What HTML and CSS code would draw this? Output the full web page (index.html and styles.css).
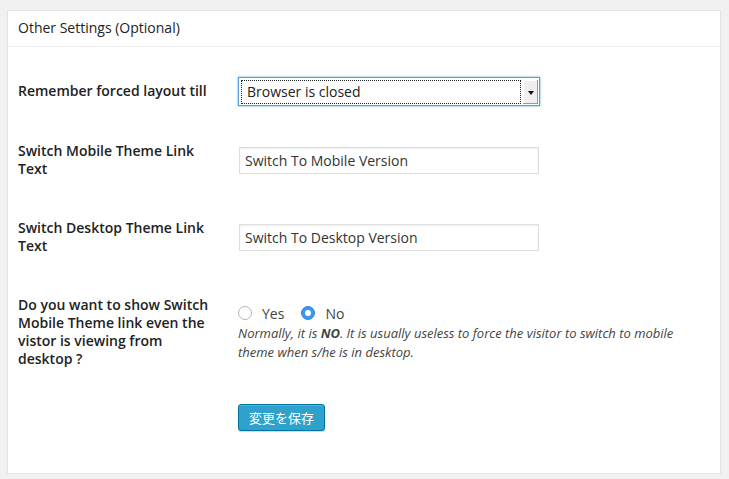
FILE: index.html
```html
<!DOCTYPE html>
<html lang="en">
<head>
<meta charset="utf-8">
<title>Other Settings</title>
<link rel="stylesheet" href="styles.css">
</head>
<body>
<div class="postbox">
  <h3 class="hndle">Other Settings (Optional)</h3>
  <div class="inside">
    <div class="form-table">
      <div class="row row-first">
        <div class="th">Remember forced layout till</div>
        <div class="td">
          <div class="select">
            <span class="select-value">Browser is closed</span>
            <span class="select-arrow"><span class="tri"></span></span>
          </div>
        </div>
      </div>
      <div class="row">
        <div class="th">Switch Mobile Theme Link Text</div>
        <div class="td"><div class="input">Switch To Mobile Version</div></div>
      </div>
      <div class="row">
        <div class="th">Switch Desktop Theme Link Text</div>
        <div class="td"><div class="input">Switch To Desktop Version</div></div>
      </div>
      <div class="row">
        <div class="th">Do you want to show Switch Mobile Theme link even the vistor is viewing from desktop ?</div>
        <div class="td">
          <div class="radios">
            <label class="radio"><span class="dot"></span>Yes</label>
            <label class="radio"><span class="dot dot-on"></span>No</label>
          </div>
          <p class="description">Normally, it is <b>NO</b>. It is usually useless to force the visitor to switch to mobile theme when s/he is in desktop.</p>
        </div>
      </div>
    </div>
    <div class="submit"><button class="button-primary" type="button">変更を保存</button></div>
  </div>
</div>
</body>
</html>
```
FILE: styles.css
```css
* { box-sizing: border-box; }
html, body { margin: 0; }
body {
  background: #f1f1f1;
  padding: 10px 9px 0 7px;
  font-family: "Open Sans", "Noto Sans", sans-serif;
  color: #222;
}
.postbox {
  width: 714px;
  background: #fff;
  border: 1px solid #e5e5e5;
  box-shadow: 0 1px 1px rgba(0,0,0,.06);
}
.hndle {
  margin: 0;
  padding: 7px 10px 9px;
  font-size: 14px;
  line-height: 19px;
  font-weight: 400;
  color: #222;
  border-bottom: 1px solid #eee;
}
.inside { padding: 15px 10px 42px; }
.row {
  display: grid;
  grid-template-columns: 210px 1fr;
}
.th {
  padding: 20px 10px 21px 0;
  font-size: 14px;
  line-height: 18px;
  font-weight: 600;
  color: #222;
}
.td {
  padding: 15px 10px;
  align-self: center;
}
.row-first .td { padding-bottom: 16px; }
.select {
  width: 302px;
  height: 29px;
  border: 1px solid #5b9dd9;
  box-shadow: 0 0 2px rgba(30,140,190,.8);
  display: flex;
  align-items: stretch;
  padding: 2px 1px 1px 2px;
  background: #fff;
}
.select-value {
  flex: 1;
  border: 1px dotted #222;
  font-size: 14px;
  line-height: 21px;
  padding-left: 5px;
  color: #222;
}
.select-arrow {
  width: 15px;
  margin-left: 2px;
  background: #efefef;
  box-shadow: inset -1px -1px 0 #9a9a9a, inset 1px 1px 0 #fff;
  display: flex;
  align-items: center;
  justify-content: center;
}
.tri {
  width: 0; height: 0;
  border-left: 3px solid transparent;
  border-right: 3px solid transparent;
  border-top: 4px solid #111;
  margin-top: 1px;
}
.input {
  width: 300px;
  height: 27px;
  border: 1px solid #ddd;
  box-shadow: inset 0 1px 2px rgba(0,0,0,.07);
  font-size: 14px;
  line-height: 25px;
  padding-left: 5px;
  color: #333;
  margin-left: 1px;
}
.radios {
  display: flex;
  align-items: center;
  height: 19px;
  margin-bottom: 1px;
  font-size: 14px;
  line-height: 17px;
  color: #444;
}
.radio {
  display: flex;
  align-items: center;
  margin-right: 17px;
}
.dot {
  width: 14px;
  height: 14px;
  border-radius: 50%;
  border: 1px solid #b4b4b4;
  background: #fff;
  margin-right: 10px;
  display: flex;
  align-items: center;
  justify-content: center;
}
.dot-on {
  border-color: #2f88ea;
  background: #3b95f3;
}
.dot-on::after {
  content: "";
  width: 6px;
  height: 6px;
  border-radius: 50%;
  background: #fff;
}
.description {
  margin: 0;
  font-size: 13px;
  line-height: 19px;
  font-style: italic;
  color: #444;
}
.submit { padding: 15px 0 0 220px; }
.button-primary {
  display: block;
  margin: 0;
  height: 27px;
  padding: 0 10px;
  background: #2ea2cc;
  border: 1px solid #0074a2;
  border-radius: 3px;
  box-shadow: inset 0 1px 0 rgba(120,200,230,.5), 0 1px 0 rgba(0,0,0,.15);
  color: #fff;
  font-family: "Noto Sans CJK JP", "Open Sans", sans-serif;
  font-size: 13px;
  line-height: 25px;
}
```
